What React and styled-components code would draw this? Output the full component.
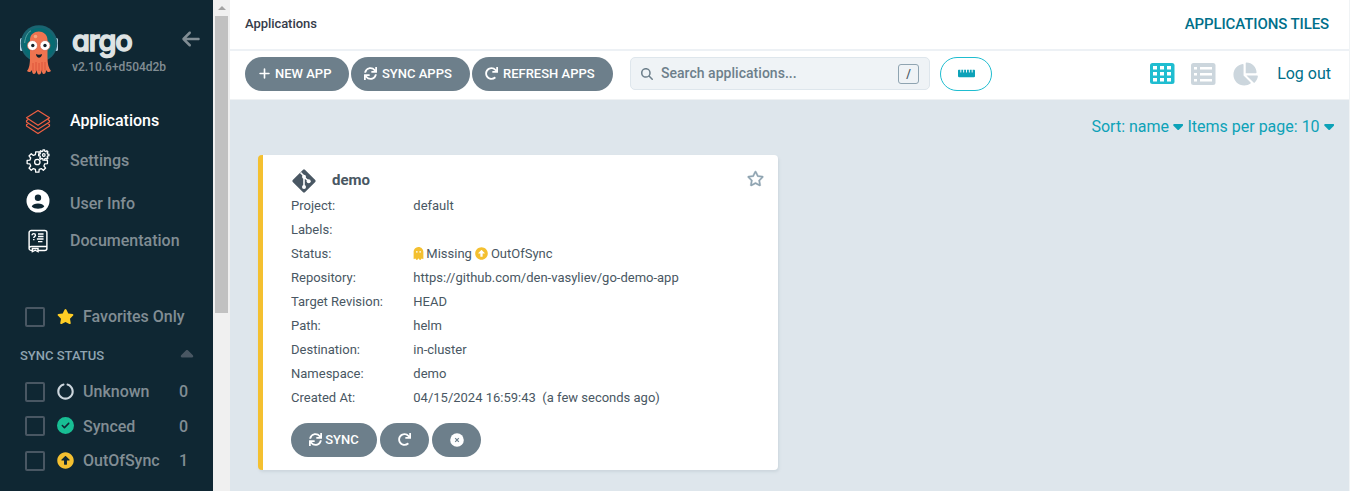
import React from "react";
import styled, { createGlobalStyle } from "styled-components";
import { FaSync, FaRedo, FaRulerHorizontal, FaArrowAltCircleUp, FaCircleNotch, FaGhost, FaStar, FaRegStar } from "react-icons/fa";
import { FaArrowLeft, FaCaretDown, FaCaretUp, FaChartPie, FaCircleCheck, FaMagnifyingGlass, FaPlus } from "react-icons/fa6";

const Global = createGlobalStyle`
  *, *::before, *::after { box-sizing: border-box; }
  body { margin: 0; font-family: Roboto, "Liberation Sans", sans-serif; overflow: hidden; }
  svg { display: block; flex: none; }
  button { font-family: inherit; cursor: pointer; }
`;

const Page = styled.div`
  display: flex;
  height: 491px;
  background: #dee6ec;
`;

const Sidebar = styled.aside`
  width: 213px;
  height: 491px;
  background: #0f2733;
  overflow: hidden;
`;

const Brand = styled.header`
  display: flex;
  height: 100px;
  padding: 24px 12px 0 19px;
`;

const BrandText = styled.div`
  margin-left: 13px;
  width: 109px;
`;

const WordMark = styled.div`
  height: 36px;
  margin-top: -3px;
  padding-top: 2px;
  font: 500 29px/36px Inter, sans-serif;
  font-feature-settings: "cv11";
  letter-spacing: -1.1px;
  color: #dee3e4;
  -webkit-text-stroke: 1.5px #dee3e4;
`;

const Version = styled.div`
  font-size: 12px;
  line-height: 14px;
  margin-top: 3px;
  color: #818d94;
  font-weight: 500;
  white-space: nowrap;
`;

const Collapse = styled.div`
  margin: 5px 0 0 auto;
  color: #818d94;
`;

const Nav = styled.nav`
  padding: 0 20px;
`;

const NavItem = styled.a`
  display: flex;
  align-items: center;
  height: ${(p) => p.$height}px;
  font-size: 16px;
  font-weight: 500;
  color: ${(p) => (p.$active ? "#fff" : "#818d94")};
`;

const NavIcon = styled.span`
  display: flex;
  justify-content: center;
  width: 36px;
  margin-right: 14px;
  padding-top: ${(p) => Math.max(0, p.$shift) * 2}px;
  padding-bottom: ${(p) => Math.max(0, -p.$shift) * 2}px;
  color: #fff;
`;

const Filters = styled.section`
  padding: 43px 20px 0;
`;

const FilterRow = styled.label`
  display: flex;
  align-items: center;
  height: ${(p) => p.$height || 34.5}px;
  padding-left: 5px;
  font-size: 16px;
  font-weight: 500;
  color: #818d94;
`;

const CheckBox = styled.span`
  width: 20px;
  height: 20px;
  border: 2px solid #495763;
  border-radius: 2px;
  margin-right: 12px;
`;

const FilterIcon = styled.span`
  color: ${(p) => p.$color};
  width: 17px;
  margin-right: 9px;
  padding-bottom: 1px;
`;

const Count = styled.span`
  margin-left: auto;
  width: 14px;
`;

const FilterHeading = styled.div`
  display: flex;
  justify-content: space-between;
  align-items: center;
  height: 39px;
  margin-bottom: -0.7px;
  font-size: 13px;
  font-weight: 500;
  color: #8fa4b1;
`;

const HeadingCaret = styled.span`
  margin-right: -4px;
  padding-bottom: 1px;
  color: #495763;
`;

const Scrollbar = styled.div`
  width: 17px;
  padding: 0 2px;
  background: #f0f0f0;
`;

const ScrollArrow = styled.div`
  display: flex;
  height: 16px;
  align-items: center;
  justify-content: center;
`;

const Thumb = styled.div`
  width: 13px;
  height: 297px;
  background: #c1c1c1;
`;

const Main = styled.main`
  flex: 1;
  border-right: 1px solid #f0f3f5;
`;

const TitleBar = styled.header`
  display: flex;
  align-items: center;
  justify-content: space-between;
  height: 51px;
  padding: 0 20px 2px 15px;
  background: #fff;
  border-bottom: 2px solid #edf1f5;
`;

const Crumb = styled.span`
  font-size: 13px;
  color: #363c4a;
  font-weight: 500;
  letter-spacing: -0.06px;
`;

const PageTitle = styled.span`
  font-size: 15px;
  font-weight: 500;
  letter-spacing: -0.1px;
  color: #006f8a;
`;

const Toolbar = styled.div`
  display: flex;
  align-items: center;
  height: 49px;
  padding: 0 18px 3px 15px;
  background: #fff;
  border-bottom: 1px solid #eff2f4;
`;

const Button = styled.button`
  display: flex;
  align-items: center;
  justify-content: ${(p) => (p.$start ? "flex-start" : "center")};
  gap: ${(p) => p.$gap || 5}px;
  width: ${(p) => p.$width}px;
  height: 34px;
  margin-right: ${(p) => p.$after || 2}px;
  padding: ${(p) => (p.$start ? "0 0 1px 13px" : "0 0 1px")};
  border: 0;
  border-radius: 17px;
  background: #6d7f8b;
  color: #fff;
  font-size: 13px;
  font-weight: 500;
  white-space: nowrap;
`;

const Search = styled.div`
  display: flex;
  align-items: center;
  width: 300px;
  height: 33px;
  margin-left: 15px;
  padding: 0 10px;
  border: 1px solid #dee6ec;
  border-radius: 5px;
  background: #eff3f6;
  color: #6d7f8b;
  font-size: 14px;
  font-weight: 500;
`;

const SearchText = styled.span`
  flex: 1;
  margin-left: 8px;
  padding-bottom: 1px;
  letter-spacing: 0.03px;
`;

const Key = styled.kbd`
  display: flex;
  align-items: center;
  justify-content: center;
  width: 21px;
  height: 20px;
  border: 1px solid #8fa4b1;
  border-radius: 3px;
  font: 500 12px Roboto, sans-serif;
  color: #495763;
`;

const OutlineButton = styled.button`
  display: flex;
  align-items: center;
  justify-content: center;
  width: 52px;
  height: 34px;
  margin-left: 10px;
  padding-bottom: 2px;
  border: 1px solid #1fbdd0;
  border-radius: 17px;
  background: #fff;
  color: #0da2b8;
`;

const Views = styled.div`
  display: flex;
  align-items: center;
  gap: 16px;
  margin-left: auto;
  color: #ccd6dd;
`;

const LogOut = styled.a`
  margin-left: 3px;
  font-size: 16px;
  color: #006f8a;
`;

const Paging = styled.div`
  display: flex;
  justify-content: flex-end;
  align-items: center;
  height: 55px;
  padding: 0 15px 2px 0;
  font-size: 16px;
  color: #0da2b8;
`;

const PageMenu = styled.span`
  display: flex;
  align-items: center;
  gap: 4px;
  margin-left: 4px;
`;

const Caret = styled(FaCaretDown)`
  width: 10.4px;
  height: 16px;
  margin-bottom: 1px;
`;

const Card = styled.article`
  width: 520px;
  height: 315px;
  margin-left: 28px;
  padding: 13px 14px 0 28px;
  border-left: 5px solid #f4c030;
  border-radius: 4px;
  background: #fff;
  box-shadow: 1px 2px 3px #ccd6dd;
  font-size: 13px;
  color: #495763;
`;

const CardHead = styled.div`
  display: flex;
  align-items: center;
  height: 26px;
  font-size: 15px;
  font-weight: 700;
`;

const AppName = styled.span`
  flex: 1;
  margin-left: 15px;
  padding-bottom: 2px;
`;

const Favorite = styled.span`
  color: #8fa4b1;
  padding-bottom: 5px;

  path { stroke: currentColor; stroke-width: 12px; }
`;

const Details = styled.dl`
  margin: -1px 0 0;
`;

const Detail = styled.div`
  display: flex;
  align-items: center;
  height: 24px;
  white-space: pre;
`;

const Term = styled.dt`
  width: 122.3px;
`;

const Value = styled.dd`
  display: flex;
  align-items: center;
  margin: 0;
`;

const StatusIcon = styled.span`
  display: flex;
  justify-content: center;
  width: ${(p) => p.$width}px;
  color: #f4c030;
  margin: 0 ${(p) => p.$after}px 0 ${(p) => p.$before || 0}px;
`;

const Actions = styled.div`
  display: flex;
  padding-top: 14px;
`;

const ArgoMascot = () => (
  <svg width="40" height="52" viewBox="0 0 40 52">
    <rect x="1" y="14" width="4" height="13" rx="1.5" fill="#b9d4e5" />
    <rect x="35" y="14" width="4" height="13" rx="1.5" fill="#b9d4e5" />
    <circle cx="20" cy="19.5" r="18.3" fill="#1a6471" />
    <circle cx="20" cy="20" r="16" fill="#076b72" />
    <path d="M5.7 19C6 13 9 8 12 6.8" fill="none" stroke="#5fa1a2" />
    <path d="M11 16c0-11.500 17.500-11.500 17.500 0v17c0 8 1.500 11 3.500 14-2 2-4 1-5-1 0 3-1 4-2.500 4-1 0-1.500-2-2-4 0 3-1 4.500-2.500 4.500s-2-2-2.500-4.500c-.5 3-1.500 4-2.500 4-1.500 0-2-2-2-4-1 2-3 3-5 1 2.500-3 3-8 3-14Z" fill="#ef7450" />
    <path d="M14 39v8M17 38v9M20 39v8M23 38v9M26 38v8" stroke="#d94d35" strokeWidth=".8" />
    <circle cx="16.5" cy="12.5" r="1.8" fill="#f8a77e" />
    <circle cx="13.5" cy="21.5" r="5" fill="#fff" stroke="#d86047" strokeWidth=".7" />
    <circle cx="26" cy="21.5" r="5" fill="#fff" stroke="#d86047" strokeWidth=".7" />
    <circle cx="13.8" cy="21.5" r="1.7" fill="#14212a" />
    <circle cx="26" cy="21.5" r="1.7" fill="#14212a" />
    <path d="M17 30c1.5 1 4.500 1 6 0-.4 5-5.600 5-6 0Z" fill="#14212a" />
  </svg>
);

const LayersIcon = () => (
  <svg width="26" height="26" viewBox="0 0 26 26" fill="none" stroke="#ef5f42" strokeWidth="1.2" strokeLinejoin="round">
    <path d="M13 1.500 24.500 8.800 13 16.300 1.500 8.800Z" />
    <path d="M3.500 10.200 1.500 11.700v1.200L13 20.300l11.500-7.400v-1.200l-2-1.500M3.500 14.200l-2 1.500V17L13 24.500 24.500 17v-1.300l-2-1.500" />
  </svg>
);

const gearPath = (cx, cy, outer, inner, teeth) => {
  const points = [];
  for (let i = 0; i < teeth; i += 1) {
    [[-0.31, inner], [-0.2, outer], [0.2, outer], [0.31, inner]].forEach(([offset, r]) => {
      const angle = ((i + offset) / teeth) * Math.PI * 2;
      points.push(`${(cx + Math.sin(angle) * r).toFixed(2)} ${(cy - Math.cos(angle) * r).toFixed(2)}`);
    });
  }
  return `M${points.join("L")}Z`;
};

const GearsIcon = () => (
  <svg width="24" height="24" viewBox="0 0 24 24" fill="none" stroke="#fff" strokeWidth="1.3" strokeLinejoin="round">
    <path d={gearPath(11.3, 13, 10.3, 7.7, 8)} />
    <circle cx="11.3" cy="13" r="2.7" />
    <path d={gearPath(17.8, 6, 5.2, 3.9, 8)} fill="#0f2733" />
    <circle cx="17.8" cy="6" r="1.3" />
  </svg>
);

const UserIcon = () => (
  <svg width="24" height="24" viewBox="0 0 24 24">
    <circle cx="12" cy="12" r="11.5" fill="#fff" />
    <circle cx="12" cy="8.8" r="3.2" fill="#0f2733" />
    <path d="M5.7 17.5c1.3-4 11.3-4 12.6 0-2.7 3-9.900 3-12.600 0Z" fill="#0f2733" />
  </svg>
);

const ManualIcon = () => (
  <svg width="20" height="24" viewBox="0 0 18 24" preserveAspectRatio="none" fill="none" stroke="#fff" strokeWidth="1.3">
    <path d="M4 21.500H3a2 2 0 0 1-2-2V3.500a2 2 0 0 1 2-2h12a2 2 0 0 1 2 2v16a2 2 0 0 1-2 2H9M1 19.500A2 2 0 0 1 3 17.500h14" />
    <path d="M4 19.500h5v3.200l-2.500-1.400L4 22.700Z" />
    <path d="M9 5h5M9 7.500h5M8 10h6M9 12.700h4" />
    <path d="M3.700 6.200c0-2 3-2 3 0 0 1.500-1.500 1.200-1.500 2.800M5.200 10v1.200" />
  </svg>
);

const GridIcon = () => (
  <svg width="25" height="21" viewBox="0 0 25 21">
    <rect width="24.5" height="21" rx="2.5" fill="#1fbdd0" />
    <path d="M3 3h4v3.400H3zM10 3h4v3.400h-4zM17 3h4v3.400h-4zM3 9h4v3.400H3zM10 9h4v3.400h-4zM17 9h4v3.400h-4zM3 15h4v3.400H3zM10 15h4v3.400h-4zM17 15h4v3.400h-4z" fill="#fff" />
  </svg>
);

const ListIcon = () => (
  <svg width="25" height="22" viewBox="0 0 25 22">
    <rect width="24.5" height="22" rx="2.5" fill="currentColor" />
    <path d="M3 4h3v2.500H3zM9 4h12v2.500H9zM3 10h3v2.500H3zM9 10h12v2.500H9zM3 16h3v2.500H3zM9 16h12v2.500H9z" fill="#fff" />
  </svg>
);

const GitIcon = () => (
  <svg width="26" height="26" viewBox="0 0 26 26">
    <rect x="4.4" y="4.4" width="17.2" height="17.2" rx="1.3" transform="rotate(45 13 13)" fill="#495763" />
    <path d="M9.500 4.500 13 8v11M13 9l4.800 4.300" fill="none" stroke="#fff" strokeWidth="1.6" />
    <circle cx="13" cy="8.7" r="2" fill="#fff" />
    <circle cx="17.7" cy="13.3" r="2" fill="#fff" />
    <circle cx="13" cy="19" r="2" fill="#fff" />
  </svg>
);

const DeleteIcon = () => (
  <svg width="14" height="14" viewBox="0 0 14 14">
    <circle cx="7" cy="7" r="6.8" fill="#fff" />
    <path d="m5.200 5.200 3.600 3.600m0-3.600L5.200 8.800" stroke="#6d7f8b" strokeWidth="1.2" />
  </svg>
);

const navItems = [
  { label: "Applications", Icon: LayersIcon, height: 41, shift: 1.5, active: true },
  { label: "Settings", Icon: GearsIcon, height: 39, shift: 0.5 },
  { label: "User Info", Icon: UserIcon, height: 46, shift: -2 },
  { label: "Documentation", Icon: ManualIcon, height: 28, shift: 1 },
];

const statuses = [
  { label: "Unknown", count: 0, Icon: FaCircleNotch, color: "#ccd6dd" },
  { label: "Synced", count: 0, Icon: FaCircleCheck, color: "#18be94" },
  { label: "OutOfSync", count: 1, Icon: FaArrowAltCircleUp, color: "#f4c030" },
];

const details = [
  ["Project:", "default"],
  ["Labels:", ""],
  ["Status:", null],
  ["Repository:", "https://github.com/den-vasyliev/go-demo-app"],
  ["Target Revision:", "HEAD"],
  ["Path:", "helm"],
  ["Destination:", "in-cluster"],
  ["Namespace:", "demo"],
  ["Created At:", "04/15/2024 16:59:43  (a few seconds ago)"],
];

export default function App() {
  return (
    <Page>
      <Global />
      <Sidebar>
        <Brand>
          <ArgoMascot />
          <BrandText>
            <WordMark>argo</WordMark>
            <Version>v2.10.6+d504d2b</Version>
          </BrandText>
          <Collapse><FaArrowLeft size={20} /></Collapse>
        </Brand>
        <Nav>
          {navItems.map(({ label, Icon, height, shift, active }) => (
            <NavItem key={label} $height={height} $active={active}>
              <NavIcon $shift={shift}><Icon /></NavIcon>
              {label}
            </NavItem>
          ))}
        </Nav>
        <Filters>
          <FilterRow $height={39}>
            <CheckBox />
            <FilterIcon $color="#ffce25"><FaStar size={17} /></FilterIcon>
            Favorites Only
          </FilterRow>
          <FilterHeading>
            SYNC STATUS
            <HeadingCaret><FaCaretUp size={20} /></HeadingCaret>
          </FilterHeading>
          {statuses.map(({ label, count, Icon, color }) => (
            <FilterRow key={label}>
              <CheckBox />
              <FilterIcon $color={color}><Icon size={17} /></FilterIcon>
              {label}
              <Count>{count}</Count>
            </FilterRow>
          ))}
        </Filters>
      </Sidebar>
      <Scrollbar>
        <ScrollArrow>
          <svg width="8" height="4" viewBox="0 0 8 4"><path d="M0 4 4 0l4 4Z" fill="#a3a3a3" /></svg>
        </ScrollArrow>
        <Thumb />
      </Scrollbar>
      <Main>
        <TitleBar>
          <Crumb>Applications</Crumb>
          <PageTitle>APPLICATIONS TILES</PageTitle>
        </TitleBar>
        <Toolbar>
          <Button $width={104} $start $gap={4}><FaPlus size={13} />NEW APP</Button>
          <Button $width={119} $start><FaSync size={13} />SYNC APPS</Button>
          <Button $width={141} $start><FaRedo size={13} />REFRESH APPS</Button>
          <Search>
            <FaMagnifyingGlass size={12} />
            <SearchText>Search applications...</SearchText>
            <Key>/</Key>
          </Search>
          <OutlineButton><FaRulerHorizontal size={17} /></OutlineButton>
          <Views>
            <GridIcon />
            <ListIcon />
            <FaChartPie size={26} />
            <LogOut>Log out</LogOut>
          </Views>
        </Toolbar>
        <Paging>
          <PageMenu>Sort: name <Caret viewBox="0 0 320 512" /></PageMenu>
          <PageMenu>Items per page: 10 <Caret viewBox="0 0 320 512" /></PageMenu>
        </Paging>
        <Card>
          <CardHead>
            <GitIcon />
            <AppName>demo</AppName>
            <Favorite><FaRegStar size={17} /></Favorite>
          </CardHead>
          <Details>
            {details.map(([term, value]) => (
              <Detail key={term}>
                <Term>{term}</Term>
                <Value>
                  {value === null ? (
                    <>
                      <StatusIcon $width={10} $after={3}><FaGhost size={13} /></StatusIcon>
                      Missing
                      <StatusIcon $width={13} $before={3} $after={3}><FaArrowAltCircleUp size={13} /></StatusIcon>
                      OutOfSync
                    </>
                  ) : value}
                </Value>
              </Detail>
            ))}
          </Details>
          <Actions>
            <Button $width={86} $after={3} $gap={3}><FaSync size={13} />SYNC</Button>
            <Button $width={49} $after={3}><FaRedo size={13} /></Button>
            <Button $width={49}><DeleteIcon /></Button>
          </Actions>
        </Card>
      </Main>
    </Page>
  );
}
